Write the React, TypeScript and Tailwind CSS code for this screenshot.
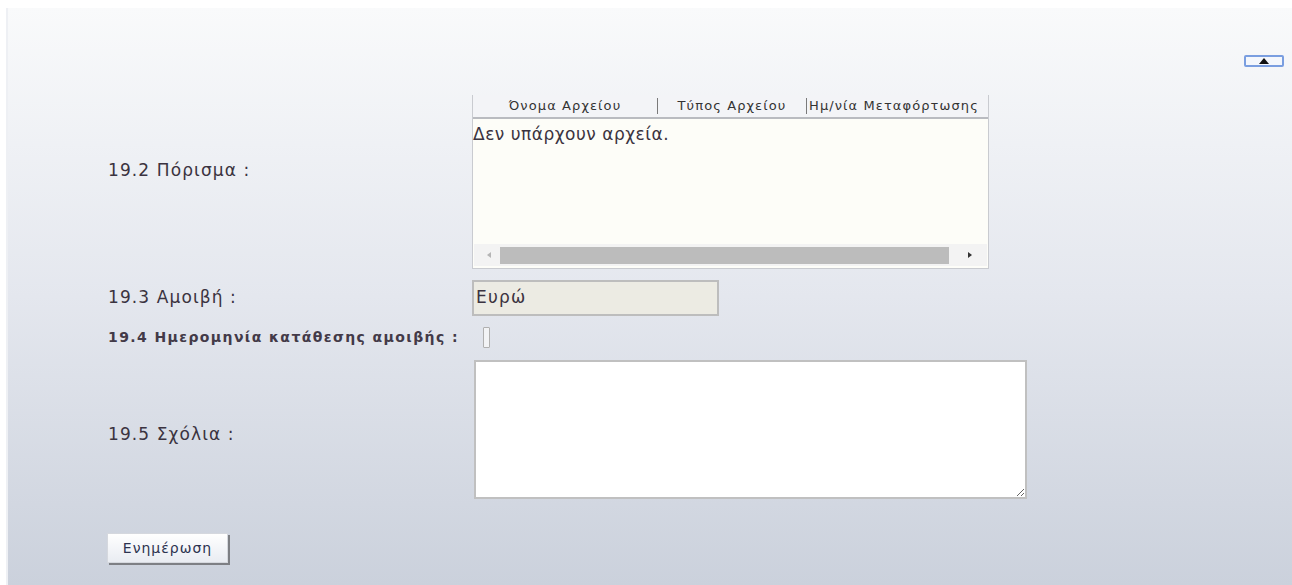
import React from "react"

const labelCls = "text-[17px] tracking-[1.1px] text-[#3b3340] font-['DejaVu_Sans',sans-serif]"

function FilesGrid() {
  return (
    <div className="w-[517px] h-[174px] border border-t-0 border-[#c9cbd0] bg-[#fdfdf8] flex flex-col font-['DejaVu_Sans',sans-serif]">
      <div className="h-[24px] flex border-b-2 border-[#b9bbc0] bg-[#f3f4f7] text-[13px] tracking-[1.1px] text-[#333] overflow-hidden whitespace-nowrap">
        <div className="w-[185px] shrink-0 flex items-center justify-center border-r border-[#7a7a7a] my-[3px]">Όνομα Αρχείου</div>
        <div className="w-[149px] shrink-0 flex items-center justify-center border-r border-[#7a7a7a] my-[3px]">Τύπος Αρχείου</div>
        <div className="flex-1 flex items-center pl-[2px]">Ημ/νία Μεταφόρτωσης</div>
      </div>
      <div className="flex-1 text-[17px] tracking-[0.5px] text-[#3b3340] leading-[22px] pt-[4px]">Δεν υπάρχουν αρχεία.</div>
      <div className="h-[22px] flex items-center px-[6px] gap-[4px] bg-[#f3f3f3] mb-[2px] mx-[1px]">
        <svg width="10" height="10" viewBox="0 0 10 10" className="shrink-0 ml-[4px]">
          <path d="M7 2 L3 5 L7 8 Z" fill="#b5b5b5" />
        </svg>
        <div className="h-[17px] flex-1 bg-[#bcbcbc] ml-[2px] mr-[12px]" />
        <svg width="10" height="10" viewBox="0 0 10 10" className="shrink-0 mr-[6px]">
          <path d="M3 2 L7 5 L3 8 Z" fill="#333" />
        </svg>
      </div>
    </div>
  )
}

export default function App() {
  return (
    <div className="w-[1292px] h-[585px] bg-white pt-[8px] pl-[6px] overflow-hidden">
      <div className="h-full border-l-2 border-[#eef0f4] bg-gradient-to-b from-[#f9fafb] via-[#e4e7ee] to-[#cbd1dc] flex flex-col">
        <div className="flex justify-end pt-[47px] pr-[8px]">
          <button className="w-[40px] h-[12px] border-2 border-[#7a9ee0] rounded-[2px] bg-[#f4f7fc] flex items-center justify-center">
            <svg width="12" height="6" viewBox="0 0 12 6">
              <path d="M1 6 L6 0 L11 6 Z" fill="#111" />
            </svg>
          </button>
        </div>

        <div className="grid grid-cols-[364px_1fr] pl-[100px] pt-[28px] items-center">
          <div className={`${labelCls} pb-[22px]`}>19.2 Πόρισμα :</div>
          <FilesGrid />

          <div className={`${labelCls} mt-[11px]`}>19.3 Αμοιβή :</div>
          <div className="mt-[11px] w-[247px] h-[36px] border-2 border-[#bdbdbd] bg-[#ecebe3] text-[17px] tracking-[1.2px] text-[#3b3340] px-[2px] flex items-center font-['DejaVu_Sans',sans-serif]">Ευρώ</div>

          <div className="mt-[11px] text-[14px] font-bold tracking-[1.4px] text-[#433a48] font-['DejaVu_Sans',sans-serif] whitespace-nowrap">19.4 Ημερομηνία κατάθεσης αμοιβής :</div>
          <div className="mt-[11px] pl-[11px]">
            <div className="w-[7px] h-[21px] border border-[#b0b0b0] rounded-[1px] bg-[#f2f3f5]" />
          </div>

          <div className={`${labelCls} mt-[12px] pt-[10px]`}>19.5 Σχόλια :</div>
          <textarea className="mt-[12px] ml-[2px] w-[553px] h-[139px] border-2 border-[#c0c0c0] bg-white resize" />
        </div>

        <div className="pl-[99px] pt-[34px]">
          <button className="w-[121px] h-[30px] bg-gradient-to-b from-[#ffffff] to-[#e9ecf2] border border-[#d5d8de] shadow-[2px_2px_0_#7d7f84] text-[14px] tracking-[1px] text-[#2d3350] font-['DejaVu_Sans',sans-serif]">Ενημέρωση</button>
        </div>
      </div>
    </div>
  )
}
